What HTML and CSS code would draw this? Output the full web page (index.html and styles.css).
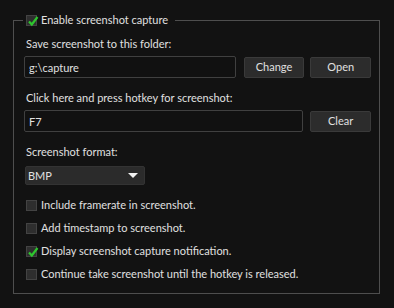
FILE: index.html
```html
<!DOCTYPE html>
<html lang="en">
<head>
    <meta charset="UTF-8">
    <title>Screenshot Settings</title>
    <link rel="stylesheet" href="styles.css">
</head>
<body>
<fieldset class="group">
    <legend class="group-title">
        <label class="check">
            <span class="box checked"><svg viewBox="0 0 12 12"><path d="M2 6.5 L4.8 9.5 L10.5 2"/></svg></span>
            Enable screenshot capture
        </label>
    </legend>

    <div class="caption">Save screenshot to this folder:</div>
    <div class="row">
        <input class="text-input folder" type="text" value="g:\capture">
        <button class="btn" type="button">Change</button>
        <button class="btn" type="button">Open</button>
    </div>

    <div class="caption">Click here and press hotkey for screenshot:</div>
    <div class="row">
        <input class="text-input hotkey" type="text" value="F7">
        <button class="btn" type="button">Clear</button>
    </div>

    <div class="caption">Screenshot format:</div>
    <div class="combo">
        <span>BMP</span>
        <span class="arrow"></span>
    </div>

    <div class="options">
        <label class="check"><span class="box"></span>Include framerate in screenshot.</label>
        <label class="check"><span class="box"></span>Add timestamp to screenshot.</label>
        <label class="check"><span class="box checked"><svg viewBox="0 0 12 12"><path d="M2 6.5 L4.8 9.5 L10.5 2"/></svg></span>Display screenshot capture notification.</label>
        <label class="check"><span class="box"></span>Continue take screenshot until the hotkey is released.</label>
    </div>
</fieldset>
</body>
</html>
```

FILE: styles.css
```css
body {
    margin: 0;
    background-color: #121212;
    color: #e0e0e0;
    font-family: 'Lato', 'Liberation Sans', sans-serif;
    font-size: 11px;
    line-height: 14px;
}
.group {
    margin: 13px 14px 0 13px;
    padding: 10px 8px 12px 10px;
    border: 1px solid #4e4e4e;
    min-width: 0;
}
.group-title {
    margin-left: -1px;
    padding: 0 7px 0 3px;
}
.check {
    display: flex;
    align-items: center;
    height: 14px;
}
.box {
    width: 9px;
    height: 9px;
    margin-right: 4px;
    background-color: #2e2e2e;
    border: 1px solid #434343;
    position: relative;
}
.box svg {
    position: absolute;
    left: 0;
    top: -1px;
    width: 12px;
    height: 12px;
    fill: none;
    stroke: #2ec62e;
    stroke-width: 2.2;
}
.caption {
    padding-left: 2px;
    margin-bottom: 5px;
}
.row {
    display: flex;
    align-items: center;
    margin-bottom: 13px;
}
.text-input {
    height: 22px;
    box-sizing: border-box;
    margin: 0;
    padding: 0 4px;
    background-color: #111111;
    border: 1px solid #404040;
    border-radius: 2px;
    color: #e0e0e0;
    font: inherit;
    outline: none;
}
.folder {
    width: 213px;
    margin-right: 8px;
}
.hotkey {
    width: 280px;
    margin-right: 7px;
}
.btn {
    width: 61px;
    height: 21px;
    margin: 0 6px 0 0;
    padding: 0;
    background-color: #2c2c2c;
    border: 1px solid #3a3a3a;
    border-radius: 2px;
    color: #e0e0e0;
    font: inherit;
}
.btn:last-child {
    margin-right: 0;
}
.combo {
    display: flex;
    align-items: center;
    justify-content: space-between;
    width: 120px;
    height: 19px;
    box-sizing: border-box;
    margin: 7px 0 0 1px;
    padding: 0 6px 0 2px;
    background-color: #2b2b2b;
    border: 1px solid #333;
    border-radius: 2px;
}
.arrow {
    width: 0;
    height: 0;
    border-left: 5px solid transparent;
    border-right: 5px solid transparent;
    border-top: 5px solid #f2f2f2;
}
.options {
    display: flex;
    flex-direction: column;
    gap: 9px;
    margin-top: 13px;
    padding-left: 2px;
}
```
